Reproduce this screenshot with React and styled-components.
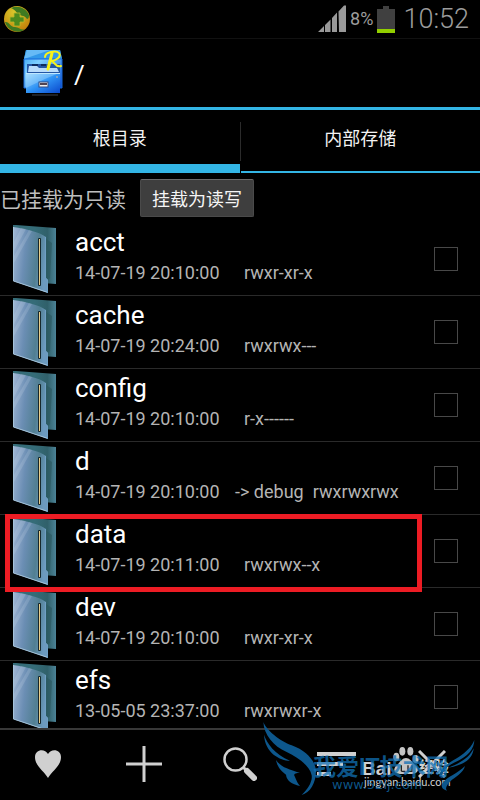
import React, { useState } from 'react';
import styled, { createGlobalStyle } from 'styled-components';

const GlobalStyle = createGlobalStyle`
  * {
    box-sizing: border-box;
  }

  body {
    margin: 0;
    background: #000;
    color: #fff;
    font-family: Roboto, "Noto Sans CJK SC", sans-serif;
  }

  button {
    font-family: inherit;
    cursor: pointer;
  }
`;

const Screen = styled.div`
  position: relative;
  display: flex;
  flex-direction: column;
  height: 100vh;
  overflow: hidden;
`;

const StatusBar = styled.div`
  flex: none;
  display: flex;
  align-items: center;
  height: 39px;
  padding: 0 11px 0 4px;
  border-bottom: 1px solid #111;
  color: #9c9c9c;
  font-weight: 300;
`;

const StatusIcons = styled.div`
  display: flex;
  align-items: center;
  gap: 4px;
  margin-left: auto;
`;

const Percent = styled.span`
  font-size: 18px;
  line-height: 20px;
  font-weight: 400;
`;

const Clock = styled.span`
  margin-left: 4px;
  font-size: 27px;
  line-height: 36px;
`;

const ActionBar = styled.header`
  flex: none;
  display: flex;
  align-items: center;
  gap: 8px;
  height: 71px;
  padding-left: 20px;
  border-bottom: 3px solid #33b5e5;
`;

const Path = styled.h1`
  margin: 0;
  padding-top: 4px;
  font-size: 26px;
  line-height: 30px;
  font-weight: 400;
`;

const Tabs = styled.nav`
  flex: none;
  display: grid;
  grid-template-columns: 1fr 1px 1fr;
  height: 63px;
`;

const TabDivider = styled.span`
  height: 39px;
  margin-top: 12px;
  background: #2b2b2b;
`;

const Tab = styled.button`
  display: flex;
  align-items: flex-start;
  justify-content: center;
  padding: 16px 0 0;
  border: 0;
  border-bottom: ${({ $active }) => ($active ? '9px' : '2px')} solid #33b5e5;
  background: none;
  color: #f3f3f3;
  font-size: 18px;
  line-height: 26px;
`;

const MountRow = styled.div`
  flex: none;
  display: flex;
  align-items: center;
  gap: 14px;
  height: 50px;
  color: #bebebe;
  font-size: 21px;
`;

const MountButton = styled.button`
  height: 38px;
  margin-bottom: 1px;
  padding: 0 11px;
  border: 1px solid #4a4a4a;
  border-top-color: #6a6a6a;
  border-radius: 2px;
  background: #3e3e3e;
  color: #f5f5f5;
  font-size: 18px;
`;

const FileList = styled.ul`
  flex: 1;
  min-height: 0;
  margin: 0;
  padding: 0;
  overflow: hidden;
  list-style: none;
`;

const FileRow = styled.li`
  position: relative;
  display: flex;
  align-items: flex-start;
  height: 73px;
  padding: 0 22px 0 12px;
  border-bottom: 1px solid #2a2a2a;
`;

const FileText = styled.label`
  flex: 1;
  padding: 4px 0 0 18px;
`;

const FileName = styled.div`
  font-size: 26px;
  line-height: 30px;
`;

const FileMeta = styled.div`
  display: flex;
  gap: 9px;
  color: #b4b4b4;
  font-size: 18px;
  line-height: 32px;
  white-space: pre;
`;

const FileDate = styled.span`
  width: 151px;
`;

const Check = styled.input`
  appearance: none;
  width: 24px;
  height: 24px;
  margin: 24px 0 0;
  border: 1px solid #484848;
  background: ${({ checked }) => (checked ? '#33b5e5' : 'transparent')};
`;

const Highlight = styled.div`
  position: absolute;
  z-index: 1;
  top: -1px;
  right: 58px;
  bottom: -5px;
  left: 5px;
  border: 5px solid #ed1c24;
  pointer-events: none;
`;

const BottomBar = styled.footer`
  flex: none;
  display: grid;
  grid-template-columns: repeat(5, 1fr);
  height: 72px;
  padding-bottom: 2px;
  border-top: 2px solid #383838;
`;

const ToolButton = styled.button`
  display: flex;
  align-items: center;
  justify-content: center;
  padding: 0;
  border: 0;
  background: none;
  color: #d0d0d0;
`;

// site stamps that lie over the bottom bar
const Stamp = styled.div`
  position: absolute;
  right: 0;
  bottom: 0;
  width: 240px;
  height: 110px;
  pointer-events: none;

  svg {
    position: absolute;
    inset: 0;
  }
`;

const StampText = styled.span`
  position: absolute;
  left: ${({ $x }) => $x}px;
  top: ${({ $y }) => $y}px;
  color: ${({ $blue }) => ($blue ? 'rgba(16, 112, 180, 0.75)' : '#d2d2d2')};
  font-family: ${({ $font }) => $font || '"Liberation Sans"'}, "Noto Sans CJK SC", sans-serif;
  font-size: ${({ $size }) => $size}px;
  line-height: ${({ $size }) => $size}px;
  font-weight: ${({ $bold }) => ($bold ? 700 : 400)};
  white-space: nowrap;
`;

const ShieldIcon = () => (
  <svg width="26" height="28" viewBox="0 0 26 28" aria-hidden="true">
    <defs>
      <radialGradient id="shield" cx="0.4" cy="0.25" r="0.8">
        <stop offset="0" stopColor="#d9c92c" />
        <stop offset="1" stopColor="#c07c08" />
      </radialGradient>
    </defs>
    <circle cx="13" cy="14" r="13" fill="url(#shield)" />
    <path d="M7 3C14 0 22 3 25 10C25 13 24 14 23 14C20 9 16 12 13 8C11 5 9 4 7 3Z" fill="#3f7a20" />
    <path d="M1 17C5 16 6 22 11 22C15 22 17 26 21 24C16 29 4 27 1 17Z" fill="#3f7a20" />
    <path d="M10 8h6v4h4v5h-4v4h-6v-4H6v-5h4z" fill="#4c8a1d" stroke="#b9b62a" strokeWidth="0.8" />
  </svg>
);

const SignalIcon = () => (
  <svg width="28" height="28" viewBox="0 0 28 28" fill="#999" aria-hidden="true">
    <path d="M0 27L6 21V27ZM7 20L12.500 14.500V27H7ZM14 13L19 7.500V27H14ZM20.500 6.500L26 0.500H28V27H21Z" />
  </svg>
);

const BatteryIcon = () => (
  <svg width="18" height="27" viewBox="0 0 18 27" aria-hidden="true">
    <path d="M6 0h6v3h6v20H0V3h6z" fill="#404040" />
    <rect y="23" width="18" height="4" fill="#92cf00" />
  </svg>
);

const CabinetIcon = () => (
  <svg width="46" height="48" viewBox="0 0 46 48" aria-hidden="true">
    <defs>
      <linearGradient id="cabinet" x1="0" y1="0" x2="1" y2="1">
        <stop offset="0" stopColor="#2f9cf0" />
        <stop offset="0.35" stopColor="#7fd0ff" />
        <stop offset="1" stopColor="#0b4fd0" />
      </linearGradient>
      <linearGradient id="drawer" x1="0" y1="0" x2="1" y2="1">
        <stop offset="0" stopColor="#9fdcff" />
        <stop offset="0.5" stopColor="#2f93f5" />
        <stop offset="1" stopColor="#0a48cc" />
      </linearGradient>
    </defs>
    <path d="M6 1H40L42 10V39H4V10Z" fill="url(#cabinet)" />
    <path d="M6 1H40L42 10H4Z" fill="#3299ea" />
    <path d="M4 10L30 1H7Z" fill="#7cc8fb" opacity="0.7" />
    <path d="M4 10H42V39H4Z" fill="none" stroke="#1767d8" />
    <rect x="7" y="15" width="33" height="9" fill="#2456a4" />
    <path d="M8 23L9 17H17L19 19H37L39 23Z" fill="#b9dcfb" />
    <path d="M12 16h6M21 16h5" stroke="#0c2c60" strokeWidth="2" />
    <path d="M6 24H40V44H6Z" fill="url(#drawer)" />
    <path d="M6 24.500H40" stroke="#c4e8ff" />
    <path d="M6 24H39C29 28 18 33 6 39Z" fill="#b6e5ff" opacity="0.35" />
    <circle cx="37" cy="28" r="1" fill="#9dabb8" />
    <rect x="19" y="33" width="9" height="5" fill="#eee" stroke="#374d80" />
    <path d="M20 34h7v2h-7z" fill="#504351" />
    <path d="M12 46H38" stroke="#3c434c" />
    <g fill="none" stroke="#f7f21a" strokeLinecap="round">
      <path d="M32 4C31 9 29 15 28 20" strokeWidth="3" />
      <path d="M25 8C25 3 36 1 39 4C42 8 35 12 31 12C35 12 35 19 41 17" strokeWidth="2" />
    </g>
  </svg>
);

const FolderIcon = () => (
  <svg width="45" height="72" viewBox="0 0 45 72" aria-hidden="true">
    <defs>
      <linearGradient id="front" x1="0" y1="0" x2="1" y2="0.2">
        <stop offset="0" stopColor="#a3b8d6" />
        <stop offset="0.4" stopColor="#6b8eb4" />
        <stop offset="0.75" stopColor="#517f92" />
        <stop offset="1" stopColor="#6c9abf" />
      </linearGradient>
      <linearGradient id="back" x1="0" y1="0" x2="1" y2="0">
        <stop offset="0.5" stopColor="#356c78" />
        <stop offset="0.8" stopColor="#30606a" />
        <stop offset="1" stopColor="#4c8397" />
      </linearGradient>
    </defs>
    <path d="M1 2L4 2L44 5V61L30 60L1 15Z" fill="url(#back)" />
    <path d="M34 16L40 20L38 55L34 60Z" fill="#29565d" opacity="0.6" />
    <path d="M1 4C15 6 27 9 34 14V55L36 57V70L1 58Z" fill="url(#front)" />
    <path d="M9 5L14 6L2 28V19ZM17 7L20 8L2 40V33Z" fill="#cfdcec" opacity="0.2" />
    <path d="M1.500 4V58L36 69.500" fill="none" stroke="#a5c3da" />
    <path d="M33.500 14V55L35.500 57V70" fill="none" stroke="#6f9fc4" />
    <rect x="26" y="15" width="3" height="48" rx="1" fill="#17282c" />
    <path d="M27.500 16V62" stroke="#e8cf8c" />
  </svg>
);

const HeartIcon = () => (
  <svg width="28" height="30" viewBox="0 0 28 30" fill="currentColor" aria-hidden="true">
    <path d="M14 29C10 22 1 17 1 8C1 0 11-1 14 5C17-1 27 0 27 8C27 17 18 22 14 29Z" />
  </svg>
);

const PlusIcon = () => (
  <svg width="36" height="36" viewBox="0 0 36 36" aria-hidden="true">
    <path d="M18 0V36M0 18H36" stroke="currentColor" strokeWidth="3" />
  </svg>
);

const SearchIcon = () => (
  <svg width="34" height="34" viewBox="0 0 34 34" fill="none" stroke="currentColor" aria-hidden="true">
    <circle cx="12.500" cy="12.500" r="11" strokeWidth="2.500" />
    <path d="M20 20L24 24" strokeWidth="3" />
    <path d="M24 24L31 31" strokeWidth="6" strokeLinecap="round" />
  </svg>
);

const MenuIcon = () => (
  <svg width="40" height="24" viewBox="0 0 40 24" aria-hidden="true">
    <path d="M1 2H40M1 12H27M1 22H15" stroke="currentColor" strokeWidth="4" />
  </svg>
);

const CloseIcon = () => (
  <svg width="28" height="28" viewBox="0 0 28 28" aria-hidden="true">
    <path d="M1 1L27 27M27 1L1 27" stroke="currentColor" strokeWidth="3" />
  </svg>
);

const PawIcon = () => (
  <svg width="240" height="110" viewBox="0 0 720 330" fill="#c4c4c4" aria-hidden="true">
    <ellipse cx="469" cy="201" rx="9" ry="13" />
    <ellipse cx="487" cy="184" rx="9" ry="13" />
    <ellipse cx="511" cy="184" rx="9" ry="13" />
    <ellipse cx="527" cy="207" rx="9" ry="12" />
    <path d="M498 204C512 204 517 220 530 229C541 246 526 255 498 251C470 255 455 246 467 229C479 220 484 204 498 204Z" />
    <path d="M484 226V244M484 244H496M504 226V244H516V226" fill="none" stroke="#222" strokeWidth="4" />
  </svg>
);

const Wings = () => (
  <svg width="240" height="110" viewBox="0 0 720 330" fill="#0d578c" aria-hidden="true">
    <g transform="translate(60 84)">
      <path d="M10 12C18 35 60 70 95 82C140 98 167 130 168 160C168 195 150 225 125 231C145 212 158 190 155 172C150 145 120 122 80 102C40 85 12 50 10 12Z" />
      <path d="M12 50C20 75 45 110 90 128C60 128 15 105 12 50Z" />
      <path d="M48 126C65 150 85 152 120 165C105 165 100 168 104 175C110 190 114 198 120 204C95 198 80 188 78 170C65 160 52 148 48 126Z" />
    </g>
    <g transform="translate(345 120)">
      <path d="M358 30C358 55 340 80 300 97C285 104 268 115 262 135L252 140C255 110 290 95 310 82C335 65 350 50 358 30Z" />
      <path d="M356 55C354 85 330 105 280 113C320 98 345 80 356 55Z" />
      <path d="M330 108C325 130 300 140 285 155C275 165 270 175 276 182C260 178 258 168 262 160C275 140 310 130 330 108Z" />
    </g>
  </svg>
);

const files = [
  { name: 'acct', date: '14-07-19 20:10:00', perms: 'rwxr-xr-x' },
  { name: 'cache', date: '14-07-19 20:24:00', perms: 'rwxrwx---' },
  { name: 'config', date: '14-07-19 20:10:00', perms: 'r-x------' },
  { name: 'd', date: '14-07-19 20:10:00', link: '-> debug', perms: 'rwxrwxrwx' },
  { name: 'data', date: '14-07-19 20:11:00', perms: 'rwxrwx--x', marked: true },
  { name: 'dev', date: '14-07-19 20:10:00', perms: 'rwxr-xr-x' },
  { name: 'efs', date: '13-05-05 23:37:00', perms: 'rwxrwxr-x' },
];

const tools = [
  { label: '收藏', icon: <HeartIcon /> },
  { label: '新建', icon: <PlusIcon /> },
  { label: '搜索', icon: <SearchIcon /> },
  { label: '菜单', icon: <MenuIcon /> },
  { label: '关闭', icon: <CloseIcon /> },
];

const App = () => {
  const [tab, setTab] = useState(0);
  const [selected, setSelected] = useState([]);

  const toggle = (name) =>
    setSelected(selected.includes(name) ? selected.filter((n) => n !== name) : [...selected, name]);

  return (
    <>
      <GlobalStyle />
      <Screen>
        <StatusBar>
          <ShieldIcon />
          <StatusIcons>
            <SignalIcon />
            <Percent>8%</Percent>
            <BatteryIcon />
            <Clock>10:52</Clock>
          </StatusIcons>
        </StatusBar>

        <ActionBar>
          <CabinetIcon />
          <Path>/</Path>
        </ActionBar>

        <Tabs>
          <Tab $active={tab === 0} onClick={() => setTab(0)}>根目录</Tab>
          <TabDivider />
          <Tab $active={tab === 1} onClick={() => setTab(1)}>内部存储</Tab>
        </Tabs>

        <MountRow>
          <span>已挂载为只读</span>
          <MountButton>挂载为读写</MountButton>
        </MountRow>

        <FileList>
          {files.map((file) => (
            <FileRow key={file.name}>
              <FolderIcon />
              <FileText htmlFor={file.name}>
                <FileName>{file.name}</FileName>
                <FileMeta>
                  <FileDate>{file.date}</FileDate>
                  <span>{file.link}</span>
                  <span>{file.perms}</span>
                </FileMeta>
              </FileText>
              <Check
                type="checkbox"
                id={file.name}
                checked={selected.includes(file.name)}
                onChange={() => toggle(file.name)}
              />
              {file.marked && <Highlight />}
            </FileRow>
          ))}
        </FileList>

        <BottomBar>
          {tools.map((tool) => (
            <ToolButton key={tool.label} aria-label={tool.label}>
              {tool.icon}
            </ToolButton>
          ))}
        </BottomBar>

        <Stamp>
          <PawIcon />
          <StampText $x={122} $y={69} $size={19} $bold>Bai</StampText>
          <StampText $x={179} $y={69} $size={15} $bold>经验</StampText>
          <StampText $x={124} $y={86} $size={11} $font="Lato">jingyan.baidu.com</StampText>
          <Wings />
          <StampText $x={73} $y={66} $size={23} $bold $blue>我爱IT技术网</StampText>
          <StampText $x={92} $y={88} $size={13} $font="&quot;DejaVu Sans&quot;" $blue>www.52ij.com</StampText>
        </Stamp>
      </Screen>
    </>
  );
};

export default App;
